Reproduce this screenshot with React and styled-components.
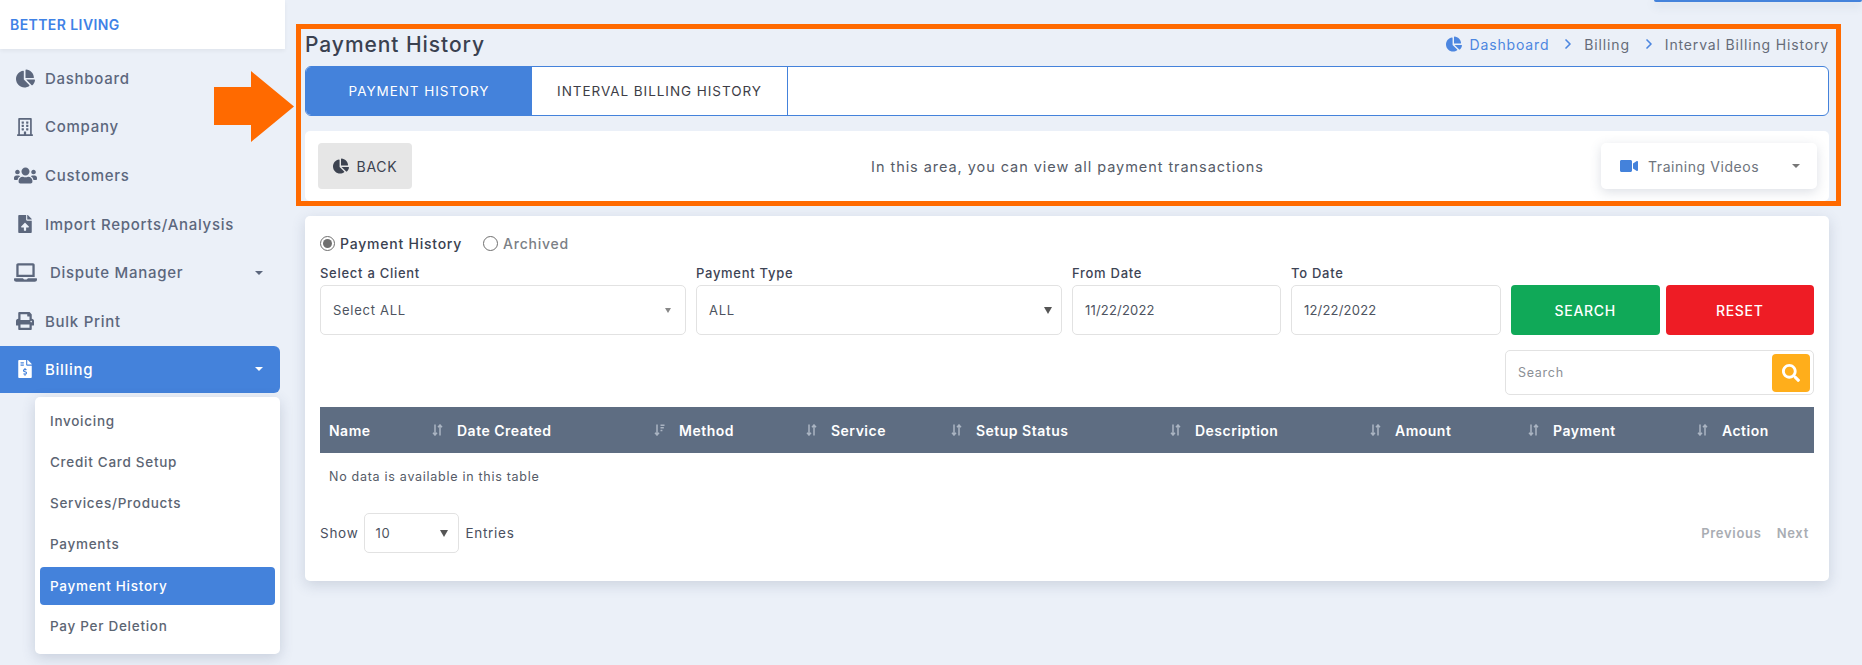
import React from "react";
import styled, { createGlobalStyle } from "styled-components";
import {
  FaChartPie,
  FaRegBuilding,
  FaUsers,
  FaFileUpload,
  FaLaptop,
  FaPrint,
  FaFileInvoiceDollar,
  FaVideo,
  FaSearch,
} from "react-icons/fa";
import { ChevronRight } from "lucide-react";

const GlobalStyle = createGlobalStyle`
  * { box-sizing: border-box; }
  html, body { margin: 0; padding: 0; }
  body {
    background-color: #ebf0f8;
    font-family: "Inter", "Open Sans", sans-serif;
    letter-spacing: 0.045em;
    color: #3a4150;
    overflow: hidden;
  }
`;

const Page = styled.div`
  position: relative;
  display: flex;
  width: 1862px;
  height: 665px;
  overflow: hidden;
`;

const Sidebar = styled.aside`
  flex: 0 0 286px;
  width: 286px;
`;

const Logo = styled.div`
  display: flex;
  align-items: center;
  height: 49px;
  width: 285px;
  padding-left: 10px;
  background-color: white;
  box-shadow: 0 2px 4px rgba(0, 0, 0, 0.05);
  color: #3f82e6;
  font-size: 14px;
  font-weight: 600;
  letter-spacing: 0.03em;
`;

const Nav = styled.nav`
  padding-top: 5px;
`;

const NavItem = styled.div`
  display: flex;
  align-items: center;
  width: 280px;
  height: ${p => (p.$active ? "47px" : "48.6px")};
  padding: 0 15px;
  border-radius: 0 6px 6px 0;
  background-color: ${p => (p.$active ? "#4482db" : "transparent")};
  color: ${p => (p.$active ? "white" : "#5c677d")};
  font-size: 15px;
  font-weight: 450;
`;

const NavIcon = styled.span`
  display: flex;
  justify-content: center;
  width: 20px;
  margin-right: ${p => p.$gap || "10px"};
  font-size: ${p => p.$size || "18px"};
  & > svg { flex: none; }
`;

const Caret = styled.span`
  margin-left: auto;
  margin-right: 2px;
  border-left: ${p => p.$half || 4}px solid transparent;
  border-right: ${p => p.$half || 4}px solid transparent;
  border-top: ${p => p.$tall || 4}px solid ${p => p.$color || "currentColor"};
`;

const SubMenu = styled.div`
  display: flex;
  flex-direction: column;
  width: 245px;
  height: 257px;
  margin: 4px 0 0 35px;
  padding: 4px 5px;
  background-color: white;
  border-radius: 5px;
  box-shadow: 0 4px 14px rgba(60, 75, 110, 0.2);
`;

const SubItem = styled.div`
  display: flex;
  align-items: center;
  height: ${p => (p.$active ? "38px" : "41px")};
  margin-top: ${p => (p.$active ? "2px" : "0")};
  margin-bottom: ${p => (p.$active ? "1px" : "0")};
  padding-left: 10px;
  border-radius: 4px;
  background-color: ${p => (p.$active ? "#4482db" : "transparent")};
  color: ${p => (p.$active ? "white" : "#5c6573")};
  font-size: 13.5px;
  font-weight: ${p => (p.$active ? 500 : 450)};
`;

const Main = styled.main`
  display: flex;
  flex-direction: column;
  flex: 0 0 1524px;
  width: 1524px;
  margin-left: 19px;
`;

const TopStrip = styled.div`
  align-self: flex-end;
  width: 208px;
  height: 2px;
  margin-right: -33px;
  background-color: #4482db;
  border-radius: 0 0 3px 3px;
  box-shadow: 0 3px 10px rgba(60, 75, 110, 0.25);
`;

const TitleRow = styled.div`
  display: flex;
  align-items: center;
  justify-content: space-between;
  height: 28px;
  margin-top: 28px;
`;

const Title = styled.h1`
  margin: 0;
  color: #3a4150;
  font-size: 21px;
  font-weight: 500;
  letter-spacing: 0.045em;
`;

const Crumbs = styled.div`
  display: flex;
  align-items: center;
  color: #666c78;
  font-size: 14px;
  font-weight: 400;
  letter-spacing: 0.06em;
`;

const CrumbLink = styled.span`
  display: flex;
  align-items: center;
  gap: 8px;
  color: #4c86e0;
  & > svg { font-size: 16px; }
`;

const CrumbSep = styled.span`
  display: flex;
  margin: 0 8px 0 11px;
  color: #4c86e0;
`;

const Tabs = styled.div`
  display: flex;
  height: 50px;
  margin-top: 8px;
  background-color: white;
  border: 1px solid #4482db;
  border-radius: 6px;
  overflow: hidden;
`;

const Tab = styled.div`
  display: flex;
  align-items: center;
  justify-content: center;
  width: ${p => p.$width};
  background-color: ${p => (p.$active ? "#4482db" : "white")};
  border-right: ${p => (p.$active ? "none" : "1px solid #4482db")};
  color: ${p => (p.$active ? "white" : "#3d3d46")};
  font-size: 13.5px;
  font-weight: 400;
  letter-spacing: 0.07em;
`;

const InfoPanel = styled.div`
  display: grid;
  grid-template-columns: 1fr auto 1fr;
  align-items: center;
  height: 70px;
  margin-top: 15px;
  padding: 0 12px 0 13px;
  background-color: white;
  border-radius: 5px;
`;

const BackButton = styled.div`
  display: flex;
  align-items: center;
  justify-content: center;
  gap: 8px;
  width: 94px;
  height: 46px;
  background-color: #e6e6e6;
  border-radius: 4px;
  color: #3d4350;
  font-size: 14px;
  & > svg { font-size: 16px; }
`;

const InfoText = styled.div`
  color: #555b67;
  font-size: 14.5px;
  letter-spacing: 0.065em;
`;

const TrainingButton = styled.div`
  display: flex;
  justify-self: end;
  align-items: center;
  gap: 10px;
  width: 216px;
  height: 46px;
  padding: 0 15px 0 19px;
  background-color: white;
  border-radius: 5px;
  box-shadow: 0 3px 12px rgba(60, 75, 110, 0.18);
  color: #6e747d;
  font-size: 14px;
  letter-spacing: 0.04em;
  & > svg { color: #4482db; font-size: 18px; }
`;

const Card = styled.section`
  height: 365px;
  margin-top: 15px;
  padding: 15px 15px 0;
  background-color: white;
  border-radius: 5px;
  box-shadow: 0 4px 14px rgba(60, 75, 110, 0.18);
`;

const RadioRow = styled.div`
  display: flex;
  align-items: center;
  height: 24px;
`;

const RadioLabel = styled.label`
  display: flex;
  align-items: center;
  gap: 5px;
  margin-right: 21px;
  color: ${p => (p.$on ? "#3a4150" : "#7b7f86")};
  font-size: 14px;
  font-weight: 500;
  letter-spacing: 0.055em;
`;

const Radio = styled.span`
  display: flex;
  align-items: center;
  justify-content: center;
  width: 15px;
  height: 15px;
  border: 1px solid #6f6f6f;
  border-radius: 50%;
  &::after {
    content: "";
    display: ${p => (p.$on ? "block" : "none")};
    width: 9px;
    height: 9px;
    border-radius: 50%;
    background-color: #6f6f6f;
  }
`;

const FilterRow = styled.div`
  display: grid;
  grid-template-columns: 366px 366px 209px 210px 1fr;
  column-gap: 10px;
  margin-top: 9px;
  align-items: end;
`;

const ButtonPair = styled.div`
  display: grid;
  grid-template-columns: 1fr 1fr;
  column-gap: 6px;
`;

const Field = styled.div`
  display: flex;
  flex-direction: column;
`;

const FieldLabel = styled.div`
  height: 19px;
  margin-bottom: 2px;
  line-height: 19px;
  color: #3d4455;
  font-size: 13px;
  font-weight: 500;
`;

const Control = styled.div`
  display: flex;
  align-items: center;
  justify-content: space-between;
  width: ${p => p.$width || "auto"};
  height: ${p => p.$height || "50px"};
  padding: 0 ${p => p.$pr || "12px"} 0 ${p => p.$pl || "12px"};
  border: 1px solid #e2e2e2;
  border-radius: 5px;
  background-color: white;
  color: #4d5360;
  font-size: 13px;
`;

const DateControl = styled(Control)`
  letter-spacing: 0.015em;
`;

const ActionButton = styled.div`
  display: flex;
  align-items: center;
  justify-content: center;
  height: 50px;
  background-color: ${p => p.$bg};
  border-radius: 4px;
  color: white;
  font-size: 14px;
  font-weight: 500;
`;

const SearchRow = styled.div`
  display: flex;
  justify-content: flex-end;
  margin-top: 15px;
`;

const SearchBox = styled.div`
  display: flex;
  align-items: center;
  justify-content: space-between;
  width: 309px;
  height: 45px;
  padding: 0 3px 0 12px;
  border: 1px solid #e2e2e2;
  border-radius: 5px;
  color: #8b8f96;
  font-size: 12.5px;
`;

const SearchButton = styled.div`
  display: flex;
  align-items: center;
  justify-content: center;
  width: 38px;
  height: 38px;
  background-color: #ffae1b;
  border-radius: 4px;
  color: white;
  font-size: 18px;
`;

const TableHead = styled.div`
  display: grid;
  grid-template-columns: 128px 222px 152px 145px 219px 200px 158px 169px 101px;
  height: 46px;
  margin-top: 12px;
  background-color: #5e6d82;
`;

const HeadCell = styled.div`
  display: flex;
  align-items: center;
  justify-content: space-between;
  padding: 0 5px 0 9px;
  color: white;
  font-size: 14px;
  font-weight: 600;
  letter-spacing: 0.035em;
`;

const EmptyRow = styled.div`
  display: flex;
  align-items: center;
  height: 47px;
  padding-left: 9px;
  color: #555b67;
  font-size: 12.5px;
`;

const FooterRow = styled.div`
  display: flex;
  align-items: center;
  justify-content: space-between;
  margin-top: 13px;
`;

const ShowGroup = styled.div`
  display: flex;
  align-items: center;
  gap: 6px;
  color: #4a5060;
  font-size: 13.5px;
`;

const Pager = styled.div`
  display: flex;
  gap: 15px;
  padding-right: 5px;
  color: #a9adb3;
  font-size: 13px;
  font-weight: 600;
`;

const OrangeFrame = styled.div`
  position: absolute;
  left: 296px;
  top: 24px;
  width: 1545px;
  height: 182px;
  border: 5px solid #ff6a00;
  pointer-events: none;
`;

const ArrowMark = styled.svg`
  position: absolute;
  left: 214px;
  top: 71px;
`;

const SortIcon = ({ active }) => (
  <svg width="11" height="12" viewBox="0 0 11 12" fill="none" stroke="#aab4c2" strokeWidth="1.5">
    <path d="M3 0.5V11M1 8.7L3 11L5 8.7" />
    {active ? (
      <path d="M6.5 1.2H10.5M6.5 3.8H9.8M6.5 6.4H8.4" />
    ) : (
      <path d="M8 11.5V1M6 3.3L8 1L10 3.3" />
    )}
  </svg>
);

const navItems = [
  { label: "Dashboard", icon: <FaChartPie />, size: "19px" },
  { label: "Company", icon: <FaRegBuilding /> },
  { label: "Customers", icon: <FaUsers />, size: "23px" },
  { label: "Import Reports/Analysis", icon: <FaFileUpload /> },
  { label: "Dispute Manager", icon: <FaLaptop />, size: "23px", gap: "15px", caret: true },
  { label: "Bulk Print", icon: <FaPrint /> },
];

const subItems = ["Invoicing", "Credit Card Setup", "Services/Products", "Payments", "Payment History", "Pay Per Deletion"];

const columns = ["Name", "Date Created", "Method", "Service", "Setup Status", "Description", "Amount", "Payment", "Action"];

const App = () => (
  <Page>
    <GlobalStyle />
    <Sidebar>
      <Logo>BETTER LIVING</Logo>
      <Nav>
        {navItems.map(item => (
          <NavItem key={item.label}>
            <NavIcon $size={item.size} $gap={item.gap}>{item.icon}</NavIcon>
            {item.label}
            {item.caret && <Caret />}
          </NavItem>
        ))}
        <NavItem $active>
          <NavIcon>
            <FaFileInvoiceDollar />
          </NavIcon>
          Billing
          <Caret />
        </NavItem>
      </Nav>
      <SubMenu>
        {subItems.map(item => (
          <SubItem key={item} $active={item === "Payment History"}>
            {item}
          </SubItem>
        ))}
      </SubMenu>
    </Sidebar>

    <Main>
      <TopStrip />
      <TitleRow>
        <Title>Payment History</Title>
        <Crumbs>
          <CrumbLink>
            <FaChartPie />
            Dashboard
          </CrumbLink>
          <CrumbSep>
            <ChevronRight size={16} strokeWidth={2.5} />
          </CrumbSep>
          Billing
          <CrumbSep>
            <ChevronRight size={16} strokeWidth={2.5} />
          </CrumbSep>
          Interval Billing History
        </Crumbs>
      </TitleRow>

      <Tabs>
        <Tab $active $width="226px">PAYMENT HISTORY</Tab>
        <Tab $width="256px">INTERVAL BILLING HISTORY</Tab>
      </Tabs>

      <InfoPanel>
        <BackButton>
          <FaChartPie />
          BACK
        </BackButton>
        <InfoText>In this area, you can view all payment transactions</InfoText>
        <TrainingButton>
          <FaVideo />
          Training Videos
          <Caret $color="#777" />
        </TrainingButton>
      </InfoPanel>

      <Card>
        <RadioRow>
          <RadioLabel $on>
            <Radio $on />
            Payment History
          </RadioLabel>
          <RadioLabel>
            <Radio />
            Archived
          </RadioLabel>
        </RadioRow>

        <FilterRow>
          <Field>
            <FieldLabel>Select a Client</FieldLabel>
            <Control>
              Select ALL
              <Caret $half={3} $tall={5} $color="#888" />
            </Control>
          </Field>
          <Field>
            <FieldLabel>Payment Type</FieldLabel>
            <Control $pr="7px">
              ALL
              <Caret $half={4} $tall={7} $color="#555" />
            </Control>
          </Field>
          <Field>
            <FieldLabel>From Date</FieldLabel>
            <DateControl>11/22/2022</DateControl>
          </Field>
          <Field>
            <FieldLabel>To Date</FieldLabel>
            <DateControl>12/22/2022</DateControl>
          </Field>
          <ButtonPair>
            <ActionButton $bg="#10a958">SEARCH</ActionButton>
            <ActionButton $bg="#ee1c25">RESET</ActionButton>
          </ButtonPair>
        </FilterRow>

        <SearchRow>
          <SearchBox>
            Search
            <SearchButton>
              <FaSearch />
            </SearchButton>
          </SearchBox>
        </SearchRow>

        <TableHead>
          {columns.map(col => (
            <HeadCell key={col}>
              {col}
              {col !== "Action" && <SortIcon active={col === "Date Created"} />}
            </HeadCell>
          ))}
        </TableHead>
        <EmptyRow>No data is available in this table</EmptyRow>

        <FooterRow>
          <ShowGroup>
            Show
            <Control $width="95px" $height="40px" $pl="10px" $pr="8px">
              10
              <Caret $half={4} $tall={7} $color="#555" />
            </Control>
            Entries
          </ShowGroup>
          <Pager>
            <span>Previous</span>
            <span>Next</span>
          </Pager>
        </FooterRow>
      </Card>
    </Main>

    <OrangeFrame />
    <ArrowMark width="81" height="71" viewBox="0 0 81 71">
      <path d="M0 16H37V0L80 35.5L37 71V54H0Z" fill="#ff6a00" />
    </ArrowMark>
  </Page>
);

export default App;
